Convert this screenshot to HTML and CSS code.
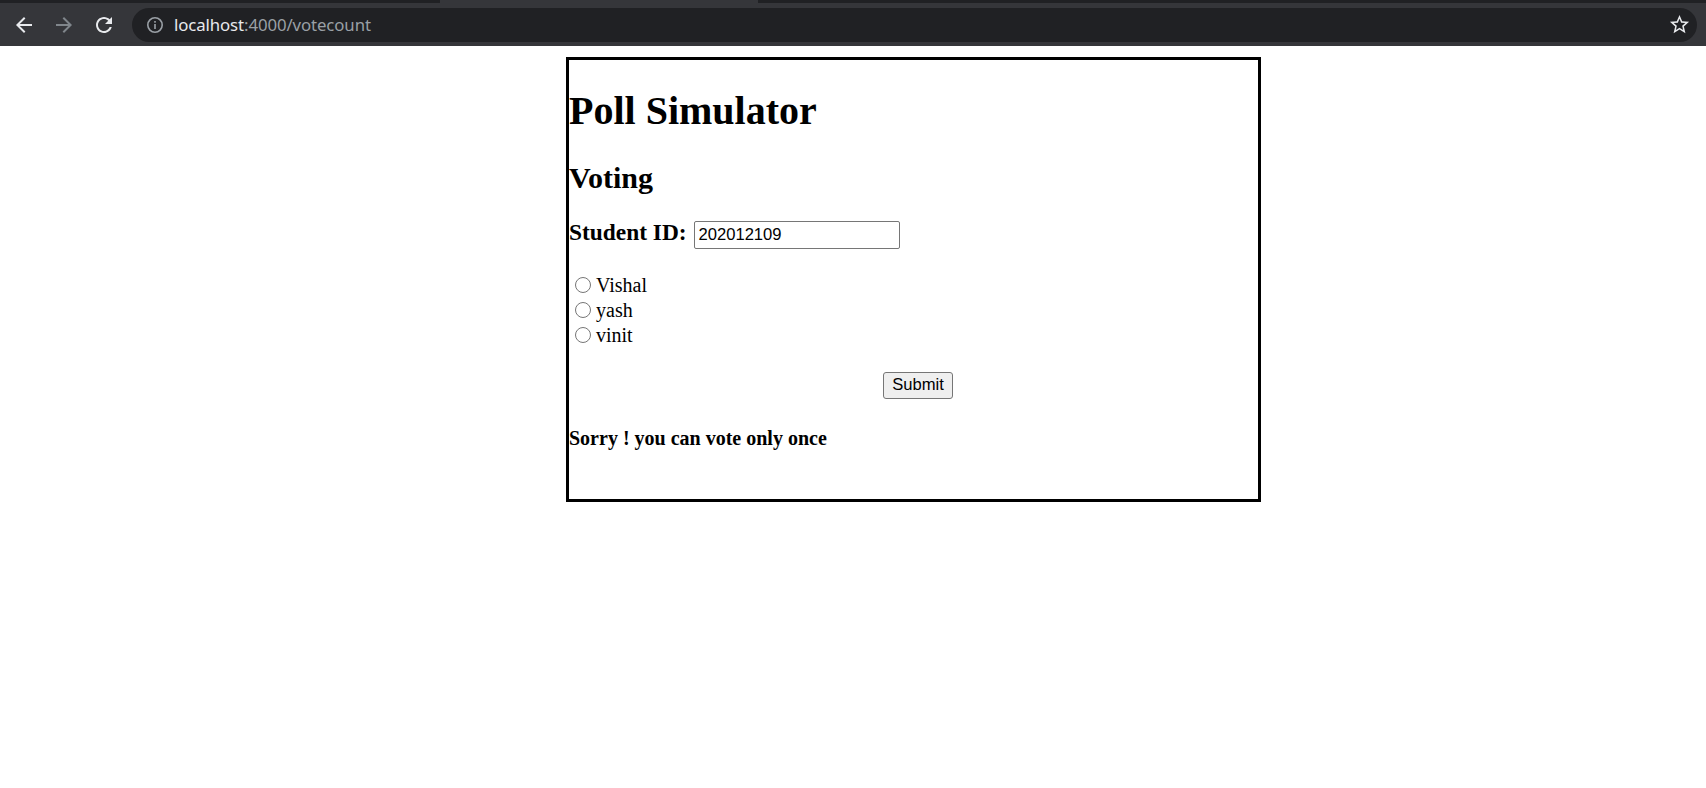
FILE: index.html
```html
<!DOCTYPE html>
<html>
<head>
<meta charset="utf-8">
<title>Poll Simulator</title>
<link rel="stylesheet" href="styles.css">
</head>
<body>
<div class="chrome">
  <div class="tabline">
    <div class="tabline-dark-left"></div>
    <div class="tabline-active"></div>
    <div class="tabline-dark-right"></div>
  </div>
  <div class="toolbar">
    <div class="navbtn">
      <svg width="24" height="24" viewBox="0 0 24 24"><path fill="#e8eaed" d="M20 11H7.83l5.59-5.59L12 4l-8 8 8 8 1.41-1.41L7.83 13H20v-2z"/></svg>
    </div>
    <div class="navbtn">
      <svg width="24" height="24" viewBox="0 0 24 24"><path fill="#80868b" d="M12 4l-1.41 1.41L16.17 11H4v2h12.17l-5.58 5.59L12 20l8-8z"/></svg>
    </div>
    <div class="navbtn">
      <svg width="24" height="24" viewBox="0 0 24 24"><path fill="#e8eaed" d="M17.65 6.35C16.2 4.9 14.21 4 12 4c-4.42 0-7.99 3.58-7.99 8s3.57 8 7.99 8c3.730 0 6.84-2.55 7.730-6h-2.080c-.82 2.33-3.04 4-5.65 4-3.310 0-6-2.69-6-6s2.69-6 6-6c1.66 0 3.140.69 4.22 1.78L13 11h7V4l-2.35 2.35z"/></svg>
    </div>
    <div class="omnibox">
      <svg class="info" width="18" height="18" viewBox="0 0 18 18"><circle cx="9" cy="9" r="7.2" fill="none" stroke="#9aa0a6" stroke-width="1.6"/><rect x="8.2" y="8" width="1.6" height="5" fill="#9aa0a6"/><rect x="8.2" y="5" width="1.6" height="1.7" fill="#9aa0a6"/></svg>
      <span class="url"><span class="host">localhost</span><span class="path">:4000/votecount</span></span>
      <span class="spacer"></span>
      <svg class="star" width="23" height="23" viewBox="0 0 24 24"><path fill="#e8eaed" d="M22 9.24l-7.19-.62L12 2 9.19 8.63 2 9.24l5.46 4.73L5.82 21 12 17.270 18.18 21l-1.63-7.03L22 9.24zM12 15.4l-3.76 2.27 1-4.28-3.32-2.88 4.38-.38L12 6.1l1.71 4.04 4.38.38-3.32 2.88 1 4.28L12 15.4z"/></svg>
    </div>
  </div>
</div>
<div class="page">
  <div class="poll">
    <h1 class="title">Poll Simulator</h1>
    <h2 class="subtitle">Voting</h2>
    <form class="vote-form">
      <h3 class="id-row">Student ID: <input class="id-input" type="text" value="202012109"></h3>
      <div class="options">
        <label class="option"><input class="radio" type="radio" name="c"> Vishal</label>
        <label class="option"><input class="radio" type="radio" name="c"> yash</label>
        <label class="option"><input class="radio" type="radio" name="c"> vinit</label>
      </div>
      <div class="submit-row"><button class="submit" type="button">Submit</button></div>
    </form>
    <h4 class="message">Sorry ! you can vote only once</h4>
  </div>
</div>
</body>
</html>
```
FILE: styles.css
```css
html, body {
  margin: 0;
  padding: 0;
  background: #fff;
}
body {
  font-family: "Liberation Serif", "Times New Roman", serif;
  font-size: 20px;
  color: #000;
}
.chrome {
  background: #35363a;
  height: 46px;
  display: flex;
  flex-direction: column;
}
.tabline {
  height: 3px;
  display: flex;
}
.tabline-dark-left {
  width: 440px;
  background: #202124;
}
.tabline-active {
  width: 318px;
  background: #35363a;
}
.tabline-dark-right {
  flex: 1;
  background: #202124;
}
.toolbar {
  flex: 1;
  display: flex;
  align-items: center;
  padding-left: 4px;
  padding-right: 9px;
}
.navbtn {
  width: 40px;
  height: 34px;
  display: flex;
  align-items: center;
  justify-content: center;
}
.omnibox {
  margin-left: 8px;
  flex: 1;
  height: 34px;
  background: #202124;
  border-radius: 17px;
  display: flex;
  align-items: center;
  padding-left: 14px;
  padding-right: 6px;
}
.info {
  margin-right: 10px;
}
.url {
  font-family: "Noto Sans", "Open Sans", sans-serif;
  font-size: 16.8px;
  letter-spacing: -0.1px;
}
.host {
  color: #e8eaed;
}
.path {
  color: #9aa0a6;
}
.spacer {
  flex: 1;
}
.star {
  margin-right: 0;
}
.page {
  padding-top: 11px;
}
.poll {
  margin-left: 566px;
  width: 689px;
  border: 3px solid #000;
  padding-bottom: 22px;
}
.title {
  font-size: 40px;
  font-weight: bold;
  margin: 26.8px 0;
}
.subtitle {
  font-size: 30px;
  font-weight: bold;
  margin: 24.9px 0;
}
.vote-form {
  margin: 0;
}
.id-row {
  font-size: 23.4px;
  font-weight: bold;
  margin: 23.4px 0;
}
.id-input {
  font-family: "Liberation Sans", Arial, sans-serif;
  font-size: 16.6px;
  width: 206px;
  height: 28px;
  box-sizing: border-box;
  padding: 1px 3px;
  border: 1px solid #767676;
  border-radius: 2px;
  vertical-align: baseline;
  margin: 0 0 0 2px;
}
.options {
  display: flex;
  flex-direction: column;
  margin-top: 4px;
}
.option {
  display: flex;
  align-items: center;
  height: 25px;
}
.radio {
  width: 16px;
  height: 16px;
  margin: 0 5px 0 6px;
}
.submit-row {
  display: flex;
  justify-content: center;
  padding-left: 9px;
  margin-top: 24px;
}
.submit {
  font-family: "Liberation Sans", Arial, sans-serif;
  font-size: 16.6px;
  padding: 2px 8px;
  height: 27px;
  background: #efefef;
  border: 1px solid #767676;
  border-radius: 3px;
  color: #000;
}
.message {
  font-size: 20px;
  font-weight: bold;
  margin: 28.6px 0 26.6px;
}
```
